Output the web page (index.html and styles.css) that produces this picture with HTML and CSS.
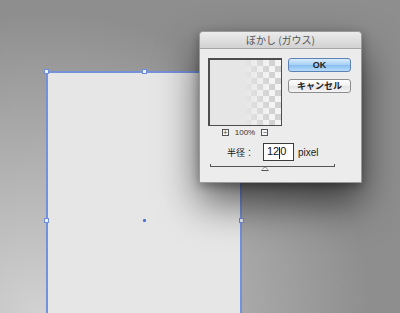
FILE: index.html
```html
<!DOCTYPE html>
<html lang="ja">
<head>
<meta charset="utf-8">
<link rel="stylesheet" href="styles.css">
</head>
<body>
<div class="canvas">
  <div class="artboard">
    <span class="handle h-tl"></span>
    <span class="handle h-tm"></span>
    <span class="handle h-tr"></span>
    <span class="handle h-ml"></span>
    <span class="handle h-mr"></span>
    <span class="center-dot"></span>
  </div>
  <div class="dialog">
    <div class="titlebar">ぼかし (ガウス)</div>
    <div class="dialog-body">
      <div class="top-row">
        <div class="preview-col">
          <div class="preview"></div>
          <div class="zoom-row">
            <span class="zbtn">+</span>
            <span class="zlabel">100%</span>
            <span class="zbtn">−</span>
          </div>
        </div>
        <div class="buttons">
          <div class="btn btn-ok">OK</div>
          <div class="btn">キャンセル</div>
        </div>
      </div>
      <div class="radius-row">
        <span class="rlabel">半径：</span>
        <span class="input">12<span class="caret"></span>0</span>
        <span class="unit">pixel</span>
      </div>
      <div class="slider">
        <span class="thumb"></span>
      </div>
    </div>
  </div>
</div>
</body>
</html>
```

FILE: styles.css
```css
* { box-sizing: border-box; }
html, body { margin: 0; padding: 0; }
body {
  width: 400px;
  height: 313px;
  overflow: hidden;
  font-family: "Noto Sans CJK JP", "Liberation Sans", sans-serif;
}
.canvas {
  position: relative;
  width: 400px;
  height: 313px;
  background: radial-gradient(ellipse 330px 300px at 10% 100%, #d2d2d2 0%, #b4b4b4 45%, #9c9c9c 80%, #8e8e8e 100%);
  overflow: hidden;
}
.artboard {
  position: absolute;
  left: 46px;
  top: 71px;
  width: 196px;
  height: 260px;
  background: #e6e6e6;
  border: 2px solid #7591dc;
  border-bottom: none;
}
.handle {
  position: absolute;
  width: 5px;
  height: 5px;
  background: #eef1fa;
  border: 1px solid #6f8cd8;
}
.h-tl { left: -4px; top: -4px; }
.h-tm { left: 94px; top: -4px; }
.h-tr { right: -4px; top: -4px; }
.h-ml { left: -4px; top: 145px; }
.h-mr { right: -4px; top: 145px; }
.center-dot {
  position: absolute;
  left: 95px;
  top: 146px;
  width: 3px;
  height: 3px;
  border-radius: 1px;
  background: #4a73d6;
}
.dialog {
  position: absolute;
  left: 199px;
  top: 31px;
  width: 163px;
  height: 152px;
  background: #ececec;
  border: 1px solid #9a9a9a;
  border-radius: 4px 4px 0 0;
  box-shadow: 0 20px 40px rgba(0,0,0,0.6), 0 3px 10px rgba(0,0,0,0.3);
  display: flex;
  flex-direction: column;
}
.titlebar {
  height: 17px;
  background: linear-gradient(#ececec, #d2d2d2);
  border-bottom: 1px solid #a6a6a6;
  border-radius: 4px 4px 0 0;
  font-size: 10px;
  line-height: 16px;
  color: #555;
  text-align: center;
}
.dialog-body {
  padding: 9px 0 0 8px;
  display: flex;
  flex-direction: column;
}
.top-row {
  display: flex;
  gap: 6px;
}
.preview-col {
  display: flex;
  flex-direction: column;
  align-items: center;
  width: 74px;
}
.preview {
  width: 74px;
  height: 68px;
  border: 1px solid #4d4d4d;
  border-top-width: 2px;
  border-left-width: 2px;
  background:
    linear-gradient(to right, #e6e6e6 0px, #e6e6e6 34px, rgba(230,230,230,0.5) 46px, rgba(230,230,230,0) 62px),
    repeating-conic-gradient(#d2d2d2 0 25%, #f4f4f4 0 50%) 5px 0 / 12px 12px;
}
.zoom-row {
  display: flex;
  align-items: center;
  gap: 6px;
  margin-top: 3px;
  height: 7px;
}
.zbtn {
  width: 7px;
  height: 7px;
  border: 1px solid #555;
  background: #f4f4f4;
  font-size: 7px;
  line-height: 5px;
  text-align: center;
  color: #333;
  font-family: "Liberation Sans", sans-serif;
}
.zlabel {
  font-size: 8px;
  line-height: 7px;
  color: #333;
  font-family: "Liberation Sans", sans-serif;
}
.buttons {
  display: flex;
  flex-direction: column;
  gap: 7px;
}
.btn {
  width: 63px;
  height: 14px;
  border: 1px solid #8e8e8e;
  border-radius: 3px;
  background: linear-gradient(#ffffff, #f0f0f0 50%, #e4e4e4 51%, #f4f4f4);
  font-size: 9px;
  font-weight: bold;
  line-height: 12px;
  text-align: center;
  color: #222;
}
.btn-ok {
  border-color: #5f82b6;
  background: linear-gradient(#d8ebfb, #a6d0f4 50%, #86bdef 51%, #b9dcf8);
  font-family: "Liberation Sans", sans-serif;
}
.radius-row {
  display: flex;
  align-items: center;
  margin-top: 7px;
  padding-left: 19px;
  height: 18px;
}
.rlabel {
  font-size: 9px;
  color: #222;
  width: 36px;
}
.input {
  width: 31px;
  height: 18px;
  border: 1px solid #3c3c3c;
  background: #fff;
  font-family: "Liberation Sans", sans-serif;
  font-size: 11px;
  line-height: 15px;
  padding-left: 3px;
  color: #111;
  position: relative;
}
.caret {
  display: inline-block;
  width: 1px;
  height: 12px;
  background: #222;
  vertical-align: -4px;
}
.unit {
  font-family: "Liberation Sans", sans-serif;
  font-size: 10px;
  color: #222;
  margin-left: 4px;
}
.slider {
  position: relative;
  margin-top: 3px;
  margin-left: 2px;
  width: 125px;
  height: 3px;
  border: 1px solid #555;
  border-top: none;
}
.thumb {
  position: absolute;
  left: 50px;
  top: 2px;
  width: 0;
  height: 0;
  border-left: 4px solid transparent;
  border-right: 4px solid transparent;
  border-bottom: 5px solid #555;
}
.thumb::after {
  content: "";
  position: absolute;
  left: -3px;
  top: 1px;
  border-left: 3px solid transparent;
  border-right: 3px solid transparent;
  border-bottom: 3px solid #f4f4f4;
}
```
